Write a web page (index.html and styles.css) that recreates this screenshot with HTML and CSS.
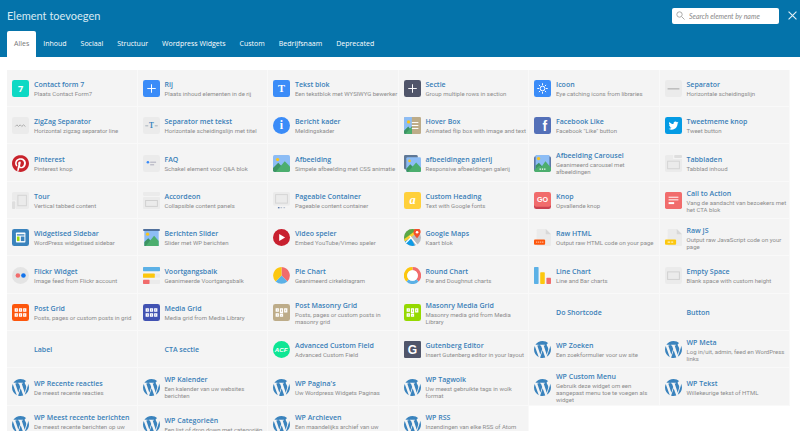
FILE: index.html
```html
<!DOCTYPE html>
<html lang="nl">
<head>
    <meta charset="UTF-8">
    <meta name="viewport" content="width=device-width, initial-scale=1.0">
    <title>Element toevoegen</title>
    <link rel="stylesheet" href="styles.css">
</head>
<body>
    <!-- Icon set -->
    <svg class="sprite" aria-hidden="true">
        <symbol id="i-row" viewBox="0 0 52 52"><rect width="52" height="52" rx="7" fill="#3b8cf8"/><path d="M26 13v26M13 26h26" stroke="#fff" stroke-width="3"/></symbol>
        <symbol id="i-section" viewBox="0 0 52 52"><rect width="52" height="52" rx="7" fill="#50556a"/><path d="M26 13v26M13 26h26" stroke="#fff" stroke-width="3"/></symbol>
        <symbol id="i-icon" viewBox="0 0 52 52"><rect width="52" height="52" rx="7" fill="#3b8cf8"/><circle cx="26" cy="26" r="7" fill="none" stroke="#fff" stroke-width="3"/><path d="M26 10v6M26 36v6M10 26h6M36 26h6M15 15l4 4M33 33l4 4M37 15l-4 4M19 33l-4 4" stroke="#fff" stroke-width="3"/></symbol>
        <symbol id="i-separator" viewBox="0 0 52 52"><rect width="52" height="52" rx="7" fill="#ebebeb"/><path d="M8 27h36" stroke="#b5b5b5" stroke-width="4"/></symbol>
        <symbol id="i-zigzag" viewBox="0 0 52 52"><rect width="52" height="52" rx="7" fill="#ebebeb"/><path d="M10 29l5-5 5 5 5-5 5 5 5-5 6 5" fill="none" stroke="#aaa" stroke-width="3"/></symbol>
        <symbol id="i-hover" viewBox="0 0 52 52"><rect width="52" height="52" rx="4" fill="#bdac89"/><path d="M0 4q0-4 4-4h20v52H4q-4 0-4-4z" fill="#8dbdf5"/><circle cx="14" cy="15" r="5" fill="#fbc31a"/><path d="M0 42l13-13 6 8 5-9v24H4q-4 0-4-4z" fill="#3d9463"/><path d="M4 52l20-23v23z" fill="#4cae6e"/><path d="M24 17h20M24 26h20M24 35h20" stroke="#fff" stroke-width="3"/></symbol>
        <symbol id="i-twitter" viewBox="0 0 52 52"><rect width="52" height="52" rx="7" fill="#049be4"/><path transform="translate(11 11) scale(1.27)" fill="#fff" d="M23.95 4.57a10 10 0 0 1-2.82.77 4.96 4.96 0 0 0 2.16-2.72c-.95.55-2 .95-3.13 1.18a4.92 4.92 0 0 0-8.38 4.48C7.69 8.09 4.07 6.13 1.64 3.16a4.92 4.92 0 0 0 1.52 6.57 4.9 4.9 0 0 1-2.23-.61v.06c0 2.38 1.7 4.37 3.95 4.82a5 5 0 0 1-2.21.09 4.94 4.94 0 0 0 4.6 3.42A9.87 9.87 0 0 1 0 19.54a14 14 0 0 0 7.55 2.21c9.05 0 14-7.5 14-13.98 0-.21 0-.42-.02-.63a9.94 9.94 0 0 0 2.42-2.57z"/></symbol>
        <symbol id="i-pinterest" viewBox="0 0 24 24"><circle cx="12" cy="12" r="11.5" fill="#fff"/><path fill="#c8232c" d="M12.017 0C5.396 0 .029 5.367.029 11.987c0 5.079 3.158 9.417 7.618 11.162-.105-.949-.199-2.403.041-3.439.219-.937 1.406-5.957 1.406-5.957s-.359-.72-.359-1.781c0-1.663.967-2.911 2.168-2.911 1.024 0 1.518.769 1.518 1.688 0 1.029-.653 2.567-.992 3.992-.285 1.193.6 2.165 1.775 2.165 2.128 0 3.768-2.245 3.768-5.487 0-2.861-2.063-4.869-5.008-4.869-3.41 0-5.409 2.562-5.409 5.199 0 1.033.394 2.143.889 2.741.099.12.112.225.085.345-.09.375-.293 1.199-.334 1.363-.053.225-.172.271-.401.165-1.495-.69-2.433-2.878-2.433-4.646 0-3.776 2.748-7.252 7.92-7.252 4.158 0 7.392 2.967 7.392 6.923 0 4.135-2.607 7.462-6.233 7.462-1.214 0-2.354-.629-2.758-1.379l-.749 2.848c-.269 1.045-1.004 2.352-1.498 3.146 1.123.345 2.306.535 3.55.535 6.607 0 11.985-5.365 11.985-11.987C23.97 5.39 18.592.026 11.985.026L12.017 0z"/></symbol>
        <symbol id="i-faq" viewBox="0 0 52 52"><rect width="52" height="52" rx="7" fill="#ebebeb"/><circle cx="15" cy="22" r="4" fill="#3b8cf8"/><path d="M22 22h18M22 30h12" stroke="#aab" stroke-width="3"/></symbol>
        <symbol id="i-image" viewBox="0 0 52 52"><rect width="52" height="52" rx="5" fill="#8dbdf5"/><circle cx="14" cy="14" r="5" fill="#fbc31a"/><path d="M0 40l16-16 14 14v14H5q-5 0-5-5z" fill="#3d9463"/><path d="M8 52l28-33 16 16v12q0 5-5 5z" fill="#4cae6e"/></symbol>
        <symbol id="i-gallery" viewBox="0 0 52 52"><rect width="42" height="44" rx="4" fill="#5f7896"/><rect x="7" y="7" width="45" height="45" rx="4" fill="#8dbdf5"/><circle cx="17" cy="18" r="4" fill="#fbc31a"/><path d="M7 42l12-14 12 12v12H11q-4 0-4-4z" fill="#3d9463"/><path d="M12 52l25-29 15 16v9q0 4-4 4z" fill="#4cae6e"/></symbol>
        <symbol id="i-carousel" viewBox="0 0 52 52"><rect y="4" width="52" height="46" rx="5" fill="#5b78a8"/><rect x="5" width="42" height="52" fill="#8dbdf5"/><circle cx="14" cy="11" r="5" fill="#fbc31a"/><path d="M5 32l10-8 11 12v16H5z" fill="#3d9463"/><path d="M0 46l17-14 6 4 12-17 17 20v8q0 5-5 5H5q-5 0-5-6z" fill="#4cae6e"/><path d="M17 43h4M24 43h4M31 43h4" stroke="#fff" stroke-width="4"/></symbol>
        <symbol id="i-tabs" viewBox="0 0 52 52"><path d="M0 5q0-5 5-5h20v12h27v35q0 5-5 5H5q-5 0-5-5z" fill="#ebebeb"/><rect x="28" width="24" height="9" rx="3" fill="#dedede"/><rect x="8" y="19" width="36" height="23" fill="none" stroke="#d4d4d4" stroke-width="3"/></symbol>
        <symbol id="i-tour" viewBox="0 0 52 52"><path d="M5 0h42q5 0 5 5v42q0 5-5 5H12V26H0V5q0-5 5-5z" fill="#ebebeb"/><rect y="28" width="10" height="24" rx="3" fill="#dedede"/><rect x="18" y="10" width="26" height="32" fill="none" stroke="#d4d4d4" stroke-width="3"/></symbol>
        <symbol id="i-accordion" viewBox="0 0 52 52"><rect width="52" height="12" rx="4" fill="#ebebeb"/><rect y="15" width="52" height="37" rx="4" fill="#ebebeb"/><rect x="8" y="26" width="36" height="18" fill="none" stroke="#d0d0d0" stroke-width="3"/></symbol>
        <symbol id="i-pageable" viewBox="0 0 52 52"><rect width="52" height="42" rx="5" fill="#ebebeb"/><rect x="8" y="8" width="36" height="26" fill="none" stroke="#d4d4d4" stroke-width="3"/><path d="M15 48h5" stroke="#5b78a8" stroke-width="4"/><path d="M23 48h5M32 48h5" stroke="#b9c2d0" stroke-width="4"/></symbol>
        <symbol id="i-cta" viewBox="0 0 52 52"><rect width="52" height="52" rx="5" fill="#f16c6c"/><path d="M11 16h30M11 24h30" stroke="#fff" stroke-width="3"/><path d="M11 34h17" stroke="#fff" stroke-width="6"/></symbol>
        <symbol id="i-sidebar" viewBox="0 0 52 52"><rect width="52" height="52" rx="7" fill="#3a83bd"/><rect x="12" y="11" width="29" height="30" rx="2" fill="#fff"/><path d="M15 18h23" stroke="#3a83bd" stroke-width="4"/><path d="M15 23h8v14h-8z" fill="#9bd70d"/><path d="M27 23h11v14H27z" fill="#3a83bd"/></symbol>
        <symbol id="i-slider" viewBox="0 0 52 52"><rect width="52" height="6" rx="3" fill="#50709c"/><path d="M4 6h44v46H4z" fill="#8dbdf5"/><circle cx="14" cy="16" r="5" fill="#fbc31a"/><path d="M4 40l12-12 14 14v10H4z" fill="#3d9463"/><path d="M8 52l26-31 14 16v15z" fill="#4cae6e"/></symbol>
        <symbol id="i-video" viewBox="0 0 52 52"><circle cx="26" cy="26" r="26" fill="#c8202f"/><path d="M19 15l18 11-18 11z" fill="#fff"/></symbol>
        <symbol id="i-maps" viewBox="0 0 52 52"><clipPath id="round"><circle cx="26" cy="26" r="26"/></clipPath><g clip-path="url(#round)"><path d="M0 0h52v52H0z" fill="#b9bcc2"/><path d="M0 0h44L0 36z" fill="#5aa845"/><path d="M0 40l20-14 14 26H0z" fill="#0e9be6"/><path d="M0 36l38-28" stroke="#fbd232" stroke-width="8"/><path d="M18 22l24 30M0 48l22-22" stroke="#fff" stroke-width="4"/></g><path d="M40 28Q27 14 29 9a11 11 0 0 1 22 0Q51 15 40 28z" fill="#f4512c"/><circle cx="40" cy="10" r="4" fill="#fff"/></symbol>
        <symbol id="i-html" viewBox="0 0 52 52"><path d="M8 4q0-4 4-4h24l16 16v32q0 4-4 4H12q-4 0-4-4z" fill="#ebebeb"/><path d="M36 0l16 16H36z" fill="#d8d8d8"/><rect y="32" width="34" height="16" rx="3" fill="#fd560c"/><path d="M6 40h4M12 40h4M18 40h4M24 40h5" stroke="#ffb48e" stroke-width="4"/></symbol>
        <symbol id="i-js" viewBox="0 0 52 52"><path d="M8 4q0-4 4-4h24l16 16v32q0 4-4 4H12q-4 0-4-4z" fill="#ebebeb"/><path d="M36 0l16 16H36z" fill="#d8d8d8"/><rect y="32" width="34" height="16" rx="3" fill="#fcc70e"/><path d="M8 40h8M19 40h6" stroke="#fff2b8" stroke-width="4"/></symbol>
        <symbol id="i-flickr" viewBox="0 0 52 52"><circle cx="26" cy="26" r="26" fill="#e4e4e4"/><circle cx="18" cy="26" r="7" fill="#f16c6c"/><circle cx="35" cy="26" r="7" fill="#1273eb"/></symbol>
        <symbol id="i-progress" viewBox="0 0 52 52"><rect width="52" height="13" rx="2" fill="#5cb1e6"/><rect y="20" width="52" height="13" rx="2" fill="#ebebeb"/><rect y="20" width="36" height="13" rx="2" fill="#fcc70e"/><rect y="39" width="52" height="13" rx="2" fill="#ebebeb"/><rect y="39" width="20" height="13" rx="2" fill="#f16c6c"/></symbol>
        <symbol id="i-pie" viewBox="0 0 52 52"><path d="M26 26V0a26 26 0 0 1 18 44z" fill="#f16c6c"/><path d="M26 26l18 18a26 26 0 0 1-36 0z" fill="#5cb1e6"/><path d="M26 26L8 44A26 26 0 0 1 26 0z" fill="#fcc70e"/></symbol>
        <symbol id="i-round" viewBox="0 0 52 52"><path d="M26 5a21 21 0 0 1 15 36" fill="none" stroke="#f16c6c" stroke-width="10"/><path d="M41 41a21 21 0 0 1-30 0" fill="none" stroke="#5cb1e6" stroke-width="10"/><path d="M11 41A21 21 0 0 1 26 5" fill="none" stroke="#fcc70e" stroke-width="10"/><circle cx="26" cy="26" r="16" fill="#fff"/></symbol>
        <symbol id="i-line" viewBox="0 0 52 52"><rect width="14" height="52" rx="2" fill="#5cb1e6"/><rect x="19" y="16" width="14" height="36" rx="2" fill="#fcc70e"/><rect x="38" y="33" width="14" height="19" rx="2" fill="#f16c6c"/></symbol>
        <symbol id="i-empty" viewBox="0 0 52 52"><rect width="52" height="52" rx="7" fill="#ebebeb"/><rect x="8" y="15" width="36" height="23" fill="none" stroke="#d0d0d0" stroke-width="3"/></symbol>
        <symbol id="i-cells" viewBox="0 0 52 52"><path d="M10 15h6v7h-6zM23 15h6v7h-6zM36 15h6v7h-6zM10 30h6v7h-6zM23 30h6v7h-6zM36 30h6v7h-6z" fill="none" stroke="#fff" stroke-width="4"/></symbol>
        <symbol id="i-bricks" viewBox="0 0 52 52"><path d="M10 15h6v7h-6zM23 15h6v11h-6zM36 15h6v9h-6zM10 30h6v7h-6zM23 32h6v5h-6z" fill="none" stroke="#fff" stroke-width="4"/></symbol>
        <symbol id="i-postgrid" viewBox="0 0 52 52"><rect width="52" height="52" rx="7" fill="#fd560c"/><use href="#i-cells"/></symbol>
        <symbol id="i-mediagrid" viewBox="0 0 52 52"><rect width="52" height="52" rx="7" fill="#4152b2"/><use href="#i-cells"/></symbol>
        <symbol id="i-postmasonry" viewBox="0 0 52 52"><rect width="52" height="52" rx="7" fill="#bdac89"/><use href="#i-bricks"/></symbol>
        <symbol id="i-mediamasonry" viewBox="0 0 52 52"><rect width="52" height="52" rx="7" fill="#95d900"/><use href="#i-bricks"/></symbol>
        <symbol id="i-wp" viewBox="1.2 1.2 21.6 21.6"><path fill="#3a83bd" d="M21.469 6.825c.84 1.537 1.318 3.3 1.318 5.175 0 3.979-2.156 7.456-5.363 9.325l3.295-9.527c.615-1.54.82-2.771.82-3.864 0-.405-.026-.78-.07-1.11m-7.981.105c.647-.03 1.232-.105 1.232-.105.582-.075.514-.93-.067-.899 0 0-1.755.135-2.88.135-1.064 0-2.85-.15-2.85-.15-.585-.03-.661.855-.075.885 0 0 .54.061 1.125.09l1.68 4.605-2.37 7.08L5.354 6.9c.649-.03 1.234-.1 1.234-.1.585-.075.516-.93-.065-.896 0 0-1.746.138-2.874.138-.2 0-.438-.008-.69-.015C4.911 3.15 8.235 1.215 12 1.215c2.809 0 5.365 1.072 7.286 2.833-.046-.003-.091-.009-.141-.009-1.06 0-1.812.923-1.812 1.914 0 .89.513 1.643 1.06 2.531.411.72.89 1.643.89 2.977 0 .915-.354 1.994-.821 3.479l-1.075 3.585-3.9-11.61.001.014zM12 22.784c-1.059 0-2.081-.153-3.048-.437l3.237-9.406 3.315 9.087c.024.053.05.101.078.149-1.12.393-2.325.609-3.582.609M1.211 12c0-1.564.336-3.05.935-4.39L7.29 21.709C3.694 19.96 1.212 16.271 1.211 12"/></symbol>
    </svg>

    <div class="panel">
        <header class="panel-header">
            <div class="title-bar">
                <h1>Element toevoegen</h1>
                <label class="search">
                    <svg class="search-icon" viewBox="0 0 9 9" aria-hidden="true"><circle cx="3.5" cy="3.5" r="2.7"/><path d="M5.6 5.6L8.5 8.5"/></svg>
                    <input type="text" placeholder="Search element by name" aria-label="Search element by name">
                </label>
                <button class="close" type="button" aria-label="Sluiten">
                    <svg viewBox="0 0 8 8"><path d="M.5.5l7 7M7.5.5l-7 7"/></svg>
                </button>
            </div>
            <nav class="tabs">
                <a class="tab active" href="#">Alles</a>
                <a class="tab" href="#">Inhoud</a>
                <a class="tab" href="#">Sociaal</a>
                <a class="tab" href="#">Structuur</a>
                <a class="tab" href="#">Wordpress Widgets</a>
                <a class="tab" href="#">Custom</a>
                <a class="tab" href="#">Bedrijfsnaam</a>
                <a class="tab" href="#">Deprecated</a>
            </nav>
        </header>

        <main class="panel-body">
            <ul class="elements">
                <li><a href="#"><svg viewBox="0 0 52 52"><rect width="52" height="52" rx="7" fill="#0dd9c4"/><text class="glyph" x="26" y="36" font-size="28">7</text></svg><div><h2>Contact form 7</h2><p>Plaats Contact Form7</p></div></a></li>
                <li><a href="#"><svg><use href="#i-row"/></svg><div><h2>Rij</h2><p>Plaats inhoud elementen in de rij</p></div></a></li>
                <li><a href="#"><svg viewBox="0 0 52 52"><rect width="52" height="52" rx="7" fill="#3b8cf8"/><text class="glyph serif" x="26" y="37" font-size="32">T</text></svg><div><h2>Tekst blok</h2><p>Een tekstblok met WYSIWYG bewerker</p></div></a></li>
                <li><a href="#"><svg><use href="#i-section"/></svg><div><h2>Sectie</h2><p>Group multiple rows in section</p></div></a></li>
                <li><a href="#"><svg><use href="#i-icon"/></svg><div><h2>Icoon</h2><p>Eye catching icons from libraries</p></div></a></li>
                <li><a href="#"><svg><use href="#i-separator"/></svg><div><h2>Separator</h2><p>Horizontale scheidingslijn</p></div></a></li>

                <li><a href="#"><svg><use href="#i-zigzag"/></svg><div><h2>ZigZag Separator</h2><p>Horizontal zigzag separator line</p></div></a></li>
                <li><a href="#"><svg viewBox="0 0 52 52"><rect width="52" height="52" rx="7" fill="#ebebeb"/><path d="M7 27h9M36 27h9" stroke="#a5b0ba" stroke-width="3"/><text class="glyph serif blue" x="26" y="34" font-size="22">T</text></svg><div><h2>Separator met tekst</h2><p>Horizontale scheidingslijn met titel</p></div></a></li>
                <li><a href="#"><svg viewBox="0 0 52 52"><circle cx="26" cy="26" r="26" fill="#3b8cf8"/><text class="glyph serif" x="26" y="38" font-size="36">i</text></svg><div><h2>Bericht kader</h2><p>Meldingskader</p></div></a></li>
                <li><a href="#"><svg><use href="#i-hover"/></svg><div><h2>Hover Box</h2><p>Animated flip box with image and text</p></div></a></li>
                <li><a href="#"><svg viewBox="0 0 52 52"><rect width="52" height="52" rx="7" fill="#5470b8"/><text class="glyph sans" x="33" y="42" font-size="42">f</text></svg><div><h2>Facebook Like</h2><p>Facebook "Like" button</p></div></a></li>
                <li><a href="#"><svg><use href="#i-twitter"/></svg><div><h2>Tweetmeme knop</h2><p>Tweet button</p></div></a></li>

                <li><a href="#"><svg><use href="#i-pinterest"/></svg><div><h2>Pinterest</h2><p>Pinterest knop</p></div></a></li>
                <li><a href="#"><svg><use href="#i-faq"/></svg><div><h2>FAQ</h2><p>Schakel element voor Q&amp;A blok</p></div></a></li>
                <li><a href="#"><svg><use href="#i-image"/></svg><div><h2>Afbeelding</h2><p>Simpele afbeelding met CSS animatie</p></div></a></li>
                <li><a href="#"><svg><use href="#i-gallery"/></svg><div><h2>afbeeldingen galerij</h2><p>Responsive afbeeldingen galerij</p></div></a></li>
                <li><a href="#"><svg><use href="#i-carousel"/></svg><div><h2>Afbeelding Carousel</h2><p>Geanimeerd carousel met afbeeldingen</p></div></a></li>
                <li><a href="#"><svg><use href="#i-tabs"/></svg><div><h2>Tabbladen</h2><p>Tabblad inhoud</p></div></a></li>

                <li><a href="#"><svg><use href="#i-tour"/></svg><div><h2>Tour</h2><p>Vertical tabbed content</p></div></a></li>
                <li><a href="#"><svg><use href="#i-accordion"/></svg><div><h2>Accordeon</h2><p>Collapsible content panels</p></div></a></li>
                <li><a href="#"><svg><use href="#i-pageable"/></svg><div><h2>Pageable Container</h2><p>Pageable content container</p></div></a></li>
                <li><a href="#"><svg viewBox="0 0 52 52"><rect width="52" height="52" rx="7" fill="#ffd03b"/><text class="glyph serif italic" x="26" y="37" font-size="38">a</text></svg><div><h2>Custom Heading</h2><p>Text with Google fonts</p></div></a></li>
                <li><a href="#"><svg viewBox="0 0 52 52"><rect y="5" width="52" height="47" rx="7" fill="#cb4250"/><rect width="52" height="45" rx="7" fill="#f16c6c"/><text class="glyph sans" x="26" y="31" font-size="22">GO</text></svg><div><h2>Knop</h2><p>Opvallende knop</p></div></a></li>
                <li><a href="#"><svg><use href="#i-cta"/></svg><div><h2>Call to Action</h2><p>Vang de aandacht van bezoekers met het CTA blok</p></div></a></li>

                <li><a href="#"><svg><use href="#i-sidebar"/></svg><div><h2>Widgetised Sidebar</h2><p>WordPress widgetised sidebar</p></div></a></li>
                <li><a href="#"><svg><use href="#i-slider"/></svg><div><h2>Berichten Slider</h2><p>Slider met WP berichten</p></div></a></li>
                <li><a href="#"><svg><use href="#i-video"/></svg><div><h2>Video speler</h2><p>Embed YouTube/Vimeo speler</p></div></a></li>
                <li><a href="#"><svg><use href="#i-maps"/></svg><div><h2>Google Maps</h2><p>Kaart blok</p></div></a></li>
                <li><a href="#"><svg><use href="#i-html"/></svg><div><h2>Raw HTML</h2><p>Output raw HTML code on your page</p></div></a></li>
                <li><a href="#"><svg><use href="#i-js"/></svg><div><h2>Raw JS</h2><p>Output raw JavaScript code on your page</p></div></a></li>

                <li><a href="#"><svg><use href="#i-flickr"/></svg><div><h2>Flickr Widget</h2><p>Image feed from Flickr account</p></div></a></li>
                <li><a href="#"><svg><use href="#i-progress"/></svg><div><h2>Voortgangsbalk</h2><p>Geanimeerde Voortgangsbalk</p></div></a></li>
                <li><a href="#"><svg><use href="#i-pie"/></svg><div><h2>Pie Chart</h2><p>Geanimeerd cirkeldiagram</p></div></a></li>
                <li><a href="#"><svg><use href="#i-round"/></svg><div><h2>Round Chart</h2><p>Pie and Doughnut charts</p></div></a></li>
                <li><a href="#"><svg><use href="#i-line"/></svg><div><h2>Line Chart</h2><p>Line and Bar charts</p></div></a></li>
                <li><a href="#"><svg><use href="#i-empty"/></svg><div><h2>Empty Space</h2><p>Blank space with custom height</p></div></a></li>

                <li><a href="#"><svg><use href="#i-postgrid"/></svg><div><h2>Post Grid</h2><p>Posts, pages or custom posts in grid</p></div></a></li>
                <li><a href="#"><svg><use href="#i-mediagrid"/></svg><div><h2>Media Grid</h2><p>Media grid from Media Library</p></div></a></li>
                <li><a href="#"><svg><use href="#i-postmasonry"/></svg><div><h2>Post Masonry Grid</h2><p>Posts, pages or custom posts in masonry grid</p></div></a></li>
                <li><a href="#"><svg><use href="#i-mediamasonry"/></svg><div><h2>Masonry Media Grid</h2><p>Masonry media grid from Media Library</p></div></a></li>
                <li><a href="#"><svg></svg><div><h2>Do Shortcode</h2></div></a></li>
                <li><a href="#"><svg></svg><div><h2>Button</h2></div></a></li>

                <li><a href="#"><svg></svg><div><h2>Label</h2></div></a></li>
                <li><a href="#"><svg></svg><div><h2>CTA sectie</h2></div></a></li>
                <li><a href="#"><svg viewBox="0 0 52 52"><circle cx="26" cy="26" r="26" fill="#0ee694"/><text class="glyph sans italic" x="25" y="33" font-size="19">ACF</text></svg><div><h2>Advanced Custom Field</h2><p>Advanced Custom Field</p></div></a></li>
                <li><a href="#"><svg viewBox="0 0 52 52"><rect width="52" height="52" rx="4" fill="#50556a"/><text class="glyph sans" x="26" y="39" font-size="37">G</text></svg><div><h2>Gutenberg Editor</h2><p>Insert Gutenberg editor in your layout</p></div></a></li>
                <li><a href="#"><svg><use href="#i-wp"/></svg><div><h2>WP Zoeken</h2><p>Een zoekformulier voor uw site</p></div></a></li>
                <li><a href="#"><svg><use href="#i-wp"/></svg><div><h2>WP Meta</h2><p>Log in/uit, admin, feed en WordPress links</p></div></a></li>

                <li><a href="#"><svg><use href="#i-wp"/></svg><div><h2>WP Recente reacties</h2><p>De meest recente reacties</p></div></a></li>
                <li><a href="#"><svg><use href="#i-wp"/></svg><div><h2>WP Kalender</h2><p>Een kalender van uw websites berichten</p></div></a></li>
                <li><a href="#"><svg><use href="#i-wp"/></svg><div><h2>WP Pagina's</h2><p>Uw Wordpress Widgets Paginas</p></div></a></li>
                <li><a href="#"><svg><use href="#i-wp"/></svg><div><h2>WP Tagwolk</h2><p>Uw meest gebruikte tags in wolk format</p></div></a></li>
                <li><a href="#"><svg><use href="#i-wp"/></svg><div><h2>WP Custom Menu</h2><p>Gebruik deze widget om een aangepast menu toe te voegen als widget</p></div></a></li>
                <li><a href="#"><svg><use href="#i-wp"/></svg><div><h2>WP Tekst</h2><p>Willekeurige tekst of HTML</p></div></a></li>

                <li><a href="#"><svg><use href="#i-wp"/></svg><div><h2>WP Meest recente berichten</h2><p>De meest recente berichten op uw website</p></div></a></li>
                <li><a href="#"><svg><use href="#i-wp"/></svg><div><h2>WP Categorieën</h2><p>Een list of drop down met categoriën</p></div></a></li>
                <li><a href="#"><svg><use href="#i-wp"/></svg><div><h2>WP Archieven</h2><p>Een maandelijks archief van uw websiteberichten</p></div></a></li>
                <li><a href="#"><svg><use href="#i-wp"/></svg><div><h2>WP RSS</h2><p>Inzendingen van elke RSS of Atom feed</p></div></a></li>
            </ul>
        </main>
    </div>
</body>
</html>
```
FILE: styles.css
```css
* {
    box-sizing: border-box;
}

body {
    margin: 0;
    font-family: "Open Sans", "Noto Sans", sans-serif;
    background: #fff;
}

h1, h2, p, ul {
    margin: 0;
    padding: 0;
}

a {
    text-decoration: none;
}

.sprite {
    position: absolute;
    width: 0;
    height: 0;
}

.panel {
    display: flex;
    flex-direction: column;
    height: 100vh;
    overflow: hidden;
}

/* Header */
.panel-header {
    background: #0473aa;
    padding: 0 3px 0 7px;
}

.title-bar {
    display: flex;
    align-items: center;
    height: 31px;
}

h1 {
    flex: 1;
    font-family: Lato, sans-serif;
    font-size: 11px;
    font-weight: 400;
    color: #d9eaf3;
}

.search {
    display: flex;
    align-items: center;
    gap: 4px;
    width: 107px;
    height: 16px;
    margin-right: 9px;
    padding: 0 4px;
    background: #fff;
    border-radius: 2px;
}

.search-icon {
    flex: none;
    width: 9px;
    height: 9px;
    fill: none;
    stroke: #aaa;
}

.search input {
    flex: 1;
    min-width: 0;
    padding: 0;
    border: 0;
    outline: 0;
    background: none;
    font: italic 7px Lato, sans-serif;
    color: #555;
}

.search input::placeholder {
    color: #888;
}

.close {
    display: flex;
    padding: 0;
    border: 0;
    background: none;
    cursor: pointer;
}

.close svg {
    width: 9px;
    height: 9px;
    fill: none;
    stroke: #e3f0f7;
}

.tabs {
    display: flex;
}

.tab {
    padding: 0 7px;
    border-radius: 2px 2px 0 0;
    font-size: 7px;
    font-weight: 500;
    line-height: 26px;
    color: #fff;
}

.tab.active {
    background: #fff;
    color: #777;
}

/* Element list */
.panel-body {
    flex: 1;
    min-height: 0;
    padding: 13px 10px 0 7px;
    overflow: hidden;
}

.elements {
    display: grid;
    grid-template-columns: repeat(6, 1fr);
    grid-auto-rows: 37px 37px 38px;
    list-style: none;
}

.elements a {
    display: flex;
    align-items: center;
    gap: 5px;
    height: 100%;
    padding: 1px 0 0 5px;
    background: #f4f4f4;
    border-right: 1px solid #f9f9f9;
    border-bottom: 1px solid #f9f9f9;
}

.elements svg {
    flex: none;
    width: 17px;
    height: 17px;
}

.elements h2 {
    font-size: 7px;
    font-weight: 600;
    line-height: 10px;
    color: #3a7fb8;
}

.elements p {
    font-family: Roboto, sans-serif;
    font-size: 6px;
    line-height: 7px;
    color: #8c8c8c;
}

/* Letters inside icons */
.glyph {
    font-family: "Open Sans", sans-serif;
    font-weight: 700;
    text-anchor: middle;
    fill: #fff;
}

.serif {
    font-family: "Liberation Serif", serif;
}

.sans {
    font-family: "Liberation Sans", sans-serif;
}

.italic {
    font-style: italic;
}

.blue {
    fill: #3a83bd;
}
```
